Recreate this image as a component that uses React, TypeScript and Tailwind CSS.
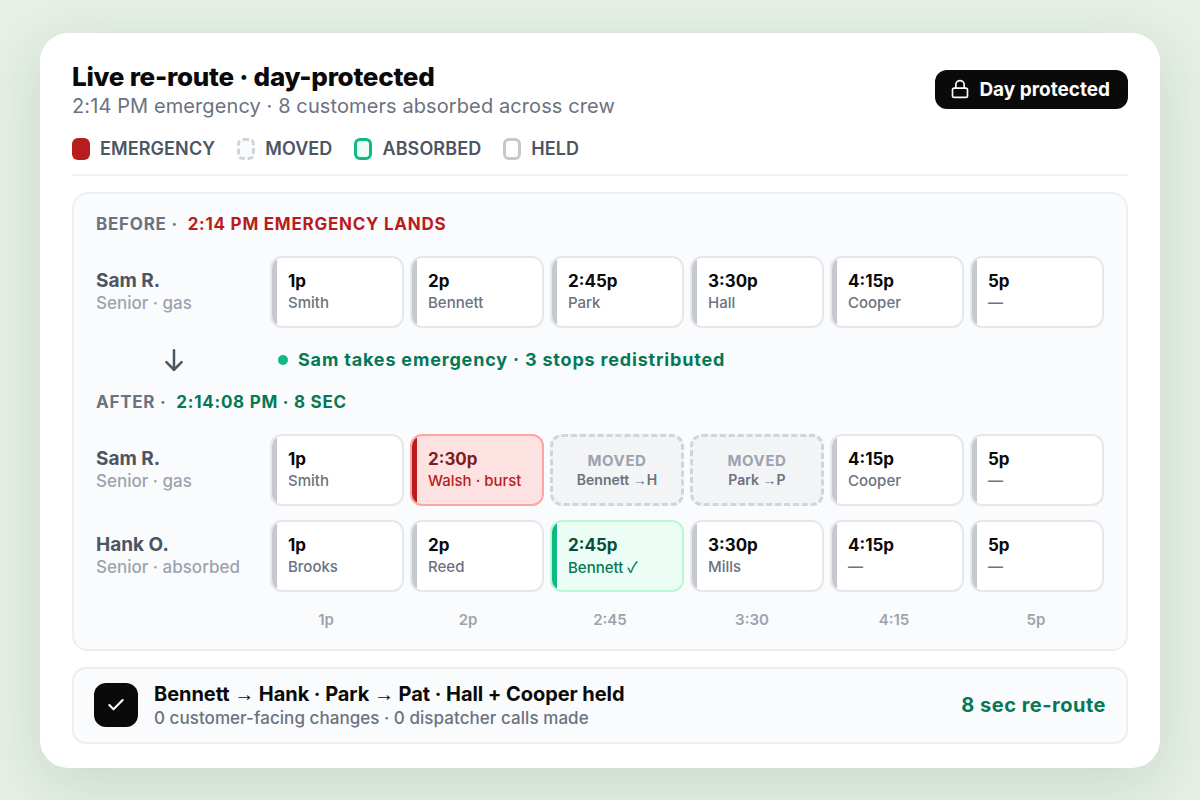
import React from "react";

const FONT = { fontFamily: '"Inter", "Liberation Sans", sans-serif' };

type Kind = "normal" | "red" | "green" | "moved";
type Cell = { t: string; s: React.ReactNode; k?: Kind };

function Arrow() {
  return <span style={{ fontFamily: '"Liberation Sans", sans-serif' }}>→</span>;
}

function Slot({ t, s, k = "normal" }: Cell) {
  if (k === "moved") {
    return (
      <div className="w-[134px] h-[72px] rounded-[12px] border-[3px] border-dashed border-[#d1d5db] bg-[#f3f4f6] flex flex-col items-center justify-center pt-[2px]">
        <div className="text-[15px] leading-[18px] font-bold tracking-[0.6px] text-[#9ca3af]">{t}</div>
        <div className="text-[14px] leading-[19px] font-semibold text-[#6b7280]">{s}</div>
      </div>
    );
  }
  const box =
    k === "red"
      ? "border-[#fca5a5] bg-[#fee2e2]"
      : k === "green"
      ? "border-[#bbf7d0] bg-[#ecfdf5]"
      : "border-[#e5e7eb] bg-white";
  const bar = k === "red" ? "bg-[#b91c1c]" : k === "green" ? "bg-[#10b981]" : "bg-[#c5c9ce]";
  const tc = k === "red" ? "text-[#7f1d1d]" : k === "green" ? "text-[#064e3b]" : "text-[#0a0a0a]";
  const sc = k === "red" ? "text-[#b91c1c] font-medium" : k === "green" ? "text-[#047857] font-medium" : "text-[#6b7280] font-medium";
  return (
    <div className={`w-[134px] h-[72px] rounded-[12px] border-2 overflow-hidden flex ${box}`}>
      <div className={`w-[5px] shrink-0 ${bar}`} />
      <div className="pl-[11px] pt-[2px] flex flex-col justify-center">
        <div className={`text-[17px] leading-[21px] font-bold ${tc}`}>{t}</div>
        <div className={`text-[15px] leading-[22px] ${sc}`}>{s}</div>
      </div>
    </div>
  );
}

function Row({ name, role, cells }: { name: string; role: string; cells: Cell[] }) {
  return (
    <div className="flex items-center">
      <div className="w-[174px] shrink-0 pt-[2px]">
        <div className="text-[19px] leading-[22px] font-bold text-[#4b5563]">{name}</div>
        <div className="text-[17px] leading-[23px] font-medium text-[#9ca3af]">{role}</div>
      </div>
      <div className="flex gap-[6px]">
        {cells.map((c, i) => (
          <Slot key={i} {...c} />
        ))}
      </div>
    </div>
  );
}

function Legend({ label, box }: { label: string; box: string }) {
  return (
    <div className="flex items-center gap-[10px]">
      <span className={`w-[18px] h-[22px] rounded-[6px] ${box}`} />
      <span className="text-[18px] leading-[22px] font-semibold tracking-[0.1px] text-[#4b5563]">{label}</span>
    </div>
  );
}

export default function App() {
  return (
    <div style={FONT} className="w-[1200px] h-[800px] overflow-hidden bg-[#e6f0e4] flex items-center justify-center">
      <div className="w-[1120px] h-[735px] rounded-[28px] bg-white px-[32px] pt-[28px] shadow-[0_16px_60px_rgba(20,70,40,0.14)]">
        <div className="flex items-start justify-between">
          <div>
            <div className="text-[26px] leading-[32px] font-extrabold tracking-[-0.25px] text-[#0a0a0a]">Live re-route · day-protected</div>
            <div className="text-[20px] leading-[27px] font-normal tracking-[0.1px] text-[#6b7280]">2:14 PM emergency · 8 customers absorbed across crew</div>
          </div>
          <div className="mt-[9px] h-[39px] rounded-[12px] bg-[#0a0a0a] flex items-center gap-[9px] pl-[15px] pr-[18px] text-white">
            <svg width="20" height="20" viewBox="0 0 24 24" fill="none" stroke="currentColor" strokeWidth="2" strokeLinecap="round" strokeLinejoin="round">
              <rect x="3" y="11" width="18" height="11" rx="2" ry="2" />
              <path d="M7 11V7a5 5 0 0 1 10 0v4" />
            </svg>
            <span className="text-[19px] font-bold pt-[2px]">Day protected</span>
          </div>
        </div>
        <div className="flex items-center gap-[22px] mt-[18px] pb-[14px] border-b-2 border-[#f3f4f6]">
          <Legend label="EMERGENCY" box="bg-[#b91c1c]" />
          <Legend label="MOVED" box="border-[3px] border-dashed border-[#d1d5db] bg-[#f9fafb]" />
          <Legend label="ABSORBED" box="border-[3px] border-[#10b981] bg-[#ecfdf5]" />
          <Legend label="HELD" box="border-[3px] border-[#c5c9ce] bg-white" />
        </div>

        <div className="mt-[16px] h-[459px] rounded-[16px] border-2 border-[#eceef1] bg-[#fafbfc] px-[22px] pt-[19px]">
          <div className="text-[17px] leading-[22px] font-bold tracking-[0.75px] text-[#6b7280]">
            BEFORE · <span className="ml-[5px] text-[#b91c1c]">2:14 PM EMERGENCY LANDS</span>
          </div>
          <div className="mt-[21px]">
            <Row
              name="Sam R."
              role="Senior · gas"
              cells={[
                { t: "1p", s: "Smith" },
                { t: "2p", s: "Bennett" },
                { t: "2:45p", s: "Park" },
                { t: "3:30p", s: "Hall" },
                { t: "4:15p", s: "Cooper" },
                { t: "5p", s: "—" },
              ]}
            />
          </div>
          <div className="flex items-center h-[32px] mt-[16px]">
            <div className="w-[182px] flex justify-start pl-[65px]">
              <svg width="26" height="26" viewBox="0 0 24 24" fill="none" stroke="#4b5563" strokeWidth="2.3" strokeLinecap="round" strokeLinejoin="round">
                <path d="M12 3v18" />
                <path d="m19 14-7 7-7-7" />
              </svg>
            </div>
            <span className="w-[10px] h-[10px] rounded-full bg-[#10b981]" />
            <span className="ml-[10px] text-[18px] font-bold tracking-[0.82px] text-[#047857]">Sam takes emergency · 3 stops redistributed</span>
          </div>
          <div className="mt-[15px] text-[17px] leading-[22px] font-bold tracking-[0.75px] text-[#6b7280]">
            AFTER · <span className="ml-[5px] text-[#047857]">2:14:08 PM · 8 SEC</span>
          </div>
          <div className="mt-[21px] flex flex-col gap-[14px]">
            <Row
              name="Sam R."
              role="Senior · gas"
              cells={[
                { t: "1p", s: "Smith" },
                { t: "2:30p", s: "Walsh · burst", k: "red" },
                { t: "MOVED", s: <>Bennett <Arrow />H</>, k: "moved" },
                { t: "MOVED", s: <>Park <Arrow />P</>, k: "moved" },
                { t: "4:15p", s: "Cooper" },
                { t: "5p", s: "—" },
              ]}
            />
            <Row
              name="Hank O."
              role="Senior · absorbed"
              cells={[
                { t: "1p", s: "Brooks" },
                { t: "2p", s: "Reed" },
                { t: "2:45p", s: <>Bennett <span style={{ fontFamily: '"Noto Sans CJK JP", sans-serif' }}>✓</span></>, k: "green" },
                { t: "3:30p", s: "Mills" },
                { t: "4:15p", s: "—" },
                { t: "5p", s: "—" },
              ]}
            />
          </div>
          <div className="mt-[16px] ml-[159px] w-[852px] grid grid-cols-6 text-center text-[15px] leading-[24px] font-semibold text-[#9ca3af]">
            {["1p", "2p", "2:45", "3:30", "4:15", "5p"].map((x) => (
              <div key={x}>{x}</div>
            ))}
          </div>
        </div>

        <div className="mt-[16px] h-[77px] rounded-[14px] border-2 border-[#eceef1] bg-[#fafbfc] pl-[20px] pr-[20px] flex items-center">
          <div className="w-[44px] h-[44px] rounded-[12px] bg-[#0a0a0a] flex items-center justify-center text-white">
            <svg width="20" height="20" viewBox="0 0 24 24" fill="none" stroke="currentColor" strokeWidth="2.5" strokeLinecap="round" strokeLinejoin="round">
              <path d="M20 6 9 17l-5-5" />
            </svg>
          </div>
          <div className="ml-[16px] flex-1">
            <div className="text-[20px] leading-[26px] font-bold tracking-[-0.06px] text-[#0a0a0a]">Bennett <Arrow /> Hank · Park <Arrow /> Pat · Hall + Cooper held</div>
            <div className="text-[17px] leading-[22px] font-medium tracking-[0.05px] text-[#6b7280]">0 customer-facing changes · 0 dispatcher calls made</div>
          </div>
          <div className="text-[20px] font-bold tracking-[0.5px] text-[#047857]">8 sec re-route</div>
        </div>
      </div>
    </div>
  );
}
